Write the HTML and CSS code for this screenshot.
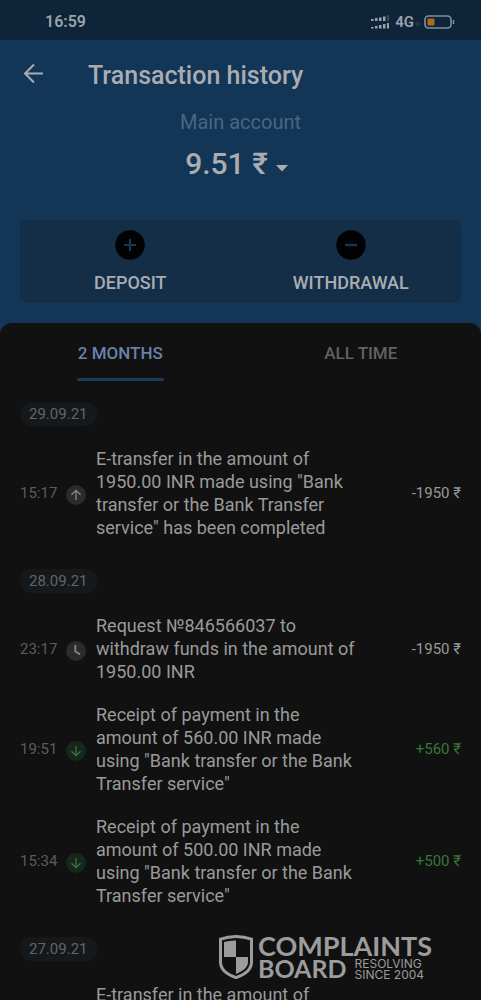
FILE: index.html
```html
<!DOCTYPE html>
<html lang="en">
<head>
<meta charset="utf-8">
<meta name="viewport" content="width=device-width, initial-scale=1">
<title>Transaction history</title>
<link rel="stylesheet" href="styles.css">
</head>
<body>
<div class="app">
  <div class="status">
    <span class="clock">16:59</span>
    <div class="status-icons">
      <svg class="signal" width="20" height="14" viewBox="0 0 20 14" fill="currentColor" aria-hidden="true">
        <path d="M1 4h2.500v2H1zM5 3h2.500v3H5zM9 2.400h2.500V6H9zM13 1.500h2.500V6H13zM1 12h2.500v1.500H1zM5 11h2.500v2.500H5zM9 10h2.500v3.500H9zM13 9h2.500v4.500H13zM17 8h2v5.500h-2z"/>
        <path opacity=".3" d="M17 0h2v6h-2z"/>
      </svg>
      <span class="network">4G</span>
      <svg class="data" width="5" height="6" viewBox="0 0 6 8" fill="none" stroke="currentColor" aria-hidden="true"><path d="M1.500 7V2M0 3l1.500-1.500M4.500 1v5M6 5L4.500 6.500"/></svg>
      <svg class="battery" width="31" height="14" viewBox="0 0 31 14" fill="none" aria-hidden="true">
        <rect x="1" y="1" width="26" height="12" rx="3.500" stroke="#85909a" stroke-width="1.600"/>
        <rect x="3.500" y="3.500" width="7" height="7" rx="1" fill="#a8701b"/>
        <path d="M29.500 5v4" stroke="#85909a" stroke-width="1.500"/>
      </svg>
    </div>
  </div>

  <header class="header">
    <div class="title-bar">
      <button class="back" type="button" aria-label="Back">
        <svg width="22" height="22" viewBox="0 0 22 22" fill="none" stroke="currentColor" stroke-width="2" aria-hidden="true"><path d="M21 10.500H3M12 1.500l-9 9 9 9"/></svg>
      </button>
      <h1 class="title">Transaction history</h1>
    </div>
    <div class="account">
      <div class="account-name">Main account</div>
      <button class="balance" type="button">9.51 ₹
        <svg width="12" height="7" viewBox="0 0 12 7" fill="currentColor" aria-hidden="true"><path d="M0 0h12L6 6.500z"/></svg>
      </button>
    </div>
    <div class="actions">
      <button class="action" type="button">
        <svg width="30" height="30" viewBox="0 0 30 30" aria-hidden="true"><circle cx="15" cy="15" r="14.700" fill="#010203"/><path d="M9 15h12M15 9v12" stroke="#16385a" stroke-width="2"/></svg>
        <span>DEPOSIT</span>
      </button>
      <button class="action" type="button">
        <svg width="30" height="30" viewBox="0 0 30 30" aria-hidden="true"><circle cx="15" cy="15" r="14.700" fill="#010203"/><path d="M9 15h12" stroke="#1b3450" stroke-width="2.400"/></svg>
        <span>WITHDRAWAL</span>
      </button>
    </div>
  </header>

  <main class="panel">
    <nav class="tabs">
      <button class="tab tab-active" type="button">2 MONTHS</button>
      <button class="tab" type="button">ALL TIME</button>
    </nav>

    <section class="day">
      <h2 class="date">29.09.21</h2>
      <div class="entry">
        <time class="time">15:17</time>
        <svg class="badge" viewBox="0 0 20 20" aria-hidden="true"><circle cx="10" cy="10" r="10" fill="#2b2b2b"/><path d="M10 15V5.500M5.500 9.800L10 5.300l4.500 4.500" fill="none" stroke="#8a8a8a" stroke-width="1.300"/></svg>
        <p class="text">E-transfer in the amount of 1950.00 INR made using "Bank transfer or the Bank Transfer service" has been completed</p>
        <span class="amount">-1950 ₹</span>
      </div>
    </section>

    <section class="day">
      <h2 class="date">28.09.21</h2>
      <div class="entry">
        <time class="time">23:17</time>
        <svg class="badge" viewBox="0 0 20 20" aria-hidden="true"><circle cx="10" cy="10" r="10" fill="#2b2b2b"/><path d="M9.300 4v6.600l4.700 2.600" fill="none" stroke="#8a8a8a" stroke-width="1.700"/></svg>
        <p class="text">Request №846566037 to withdraw funds in the amount of 1950.00 INR</p>
        <span class="amount">-1950 ₹</span>
      </div>
      <div class="entry">
        <time class="time">19:51</time>
        <svg class="badge" viewBox="0 0 20 20" aria-hidden="true"><circle cx="10" cy="10" r="10" fill="#16281a"/><path d="M10 5v9.500M5.500 10.200l4.500 4.500 4.500-4.500" fill="none" stroke="#3f7047" stroke-width="1.300"/></svg>
        <p class="text">Receipt of payment in the amount of 560.00 INR made using "Bank transfer or the Bank Transfer service"</p>
        <span class="amount amount-in">+560 ₹</span>
      </div>
      <div class="entry">
        <time class="time">15:34</time>
        <svg class="badge" viewBox="0 0 20 20" aria-hidden="true"><circle cx="10" cy="10" r="10" fill="#16281a"/><path d="M10 5v9.500M5.500 10.200l4.500 4.500 4.500-4.500" fill="none" stroke="#3f7047" stroke-width="1.300"/></svg>
        <p class="text">Receipt of payment in the amount of 500.00 INR made using "Bank transfer or the Bank Transfer service"</p>
        <span class="amount amount-in">+500 ₹</span>
      </div>
    </section>

    <section class="day">
      <h2 class="date">27.09.21</h2>
      <div class="entry">
        <span class="time"></span>
        <span class="badge"></span>
        <p class="text">E-transfer in the amount of</p>
      </div>
    </section>
  </main>

  <div class="watermark">
    <svg width="34" height="44" viewBox="0 0 34 44" aria-hidden="true">
      <path d="M1.500 4.200Q17-1.200 32.500 4.200V27C32.500 34 26 39.500 17 42.600 8 39.500 1.500 34 1.500 27z" fill="#111" stroke="#9c9c9c" stroke-width="3"/>
      <path d="M17 5.500V22H5V7Q11 5.300 17 5.500zM17 22h12v5c0 5-4.500 9-12 12z" fill="#9c9c9c"/>
    </svg>
    <div class="brand">
      <div class="brand-top">COMPLAINTS</div>
      <div class="brand-row">
        <span class="brand-bottom">BOARD</span>
        <span class="tagline">RESOLVING<br>SINCE 2004</span>
      </div>
    </div>
  </div>
</div>
</body>
</html>
```
FILE: styles.css
```css
* {
  box-sizing: border-box;
}

body {
  margin: 0;
  background: #111;
  font-family: Roboto, "Noto Sans", sans-serif;
}

button {
  margin: 0;
  padding: 0;
  border: 0;
  background: none;
  color: inherit;
  font: inherit;
}

h1, h2, p {
  margin: 0;
}

svg {
  display: block;
}

.app {
  position: relative;
  display: flex;
  flex-direction: column;
  height: 100vh;
  overflow: hidden;
  background: #133556;
}

.status {
  display: flex;
  flex: none;
  align-items: center;
  justify-content: space-between;
  height: 40px;
  padding: 3px 26px 0 45px;
  background: #0e2438;
  color: #9ba3ab;
}

.clock {
  font-size: 16px;
  font-weight: 600;
}

.status-icons {
  display: flex;
  align-items: center;
}

.network {
  margin: 0 1px 0 5px;
  font-size: 15px;
  font-weight: 600;
}

.data {
  margin-top: 5px;
  opacity: 0.4;
}

.battery {
  margin-left: 4px;
}

.header {
  flex: none;
  padding-bottom: 20px;
  color: #a9adb2;
}

.title-bar {
  display: flex;
  align-items: center;
  gap: 44px;
  height: 68px;
  padding: 0 22px;
}

.title {
  padding-top: 3px;
  font-size: 25px;
  font-weight: 500;
  line-height: 28px;
}

.account {
  display: flex;
  flex-direction: column;
  align-items: center;
  height: 112px;
}

.account-name {
  color: #4b6682;
  font-size: 20px;
  line-height: 28px;
}

.balance {
  display: flex;
  align-items: center;
  gap: 8px;
  margin-top: 8px;
  padding-right: 8px;
  font-size: 30px;
  font-weight: 500;
  line-height: 40px;
}

.balance svg {
  margin-top: 8px;
}

.actions {
  display: flex;
  margin: 0 20px;
  border-radius: 8px;
  background: #142e47;
}

.action {
  display: flex;
  flex: 1;
  flex-direction: column;
  align-items: center;
  gap: 13px;
  padding: 10px 0;
  font-size: 18px;
  font-weight: 500;
  line-height: 20px;
}

.panel {
  flex: 1;
  min-height: 0;
  border-radius: 12px 12px 0 0;
  background: #111;
  color: #9a9a9a;
}

.tabs {
  display: flex;
  margin-bottom: 21px;
}

.tab {
  position: relative;
  flex: 1;
  height: 58px;
  padding-top: 2px;
  color: #626262;
  font-size: 17px;
  font-weight: 500;
}

.tab-active {
  color: #6982a8;
}

.tab-active::after {
  position: absolute;
  bottom: 0;
  left: 50%;
  width: 87px;
  height: 3px;
  margin-left: -43px;
  border-radius: 2px;
  background: #1d3b5f;
  content: "";
}

.day {
  padding: 0 20px;
  margin-bottom: 20px;
}

.date {
  width: max-content;
  margin-bottom: 11px;
  padding: 0 9px;
  border-radius: 12px;
  background: #15191b;
  color: #616567;
  font-size: 15px;
  font-weight: 400;
  line-height: 24px;
}

.entry {
  display: flex;
  align-items: center;
  padding: 10px 0;
}

.time {
  flex: none;
  width: 46px;
  color: #5c5c5c;
  font-size: 15px;
}

.badge {
  flex: none;
  width: 20px;
  height: 20px;
  margin-top: 4px;
}

.text {
  width: 260px;
  margin-left: 10px;
  font-size: 18px;
  line-height: 23px;
}

.amount {
  margin-left: auto;
  font-size: 15px;
}

.amount-in {
  color: #347a38;
}

.watermark {
  position: absolute;
  right: 49px;
  bottom: 20px;
  display: flex;
  align-items: center;
  gap: 5px;
  color: #9c9c9c;
}

.brand-top,
.brand-bottom {
  font-family: Lato, sans-serif;
  font-size: 27px;
  font-weight: 700;
  line-height: 23px;
}

.brand-bottom {
  font-size: 25px;
}

.brand-row {
  display: flex;
  align-items: center;
  gap: 8px;
}

.tagline {
  font-family: Inter, sans-serif;
  font-size: 12px;
  line-height: 11px;
}
```
